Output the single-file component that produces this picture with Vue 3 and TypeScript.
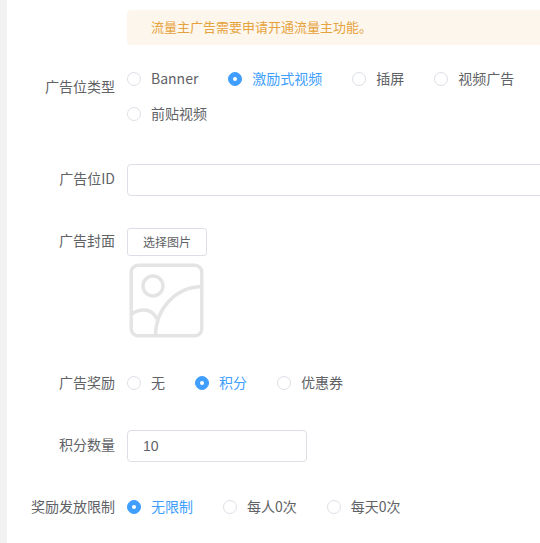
<script setup lang="ts">
import { ref } from 'vue'

interface RadioOption {
  value: string
  label: string
}

const typeOptions: RadioOption[] = [
  { value: 'banner', label: 'Banner' },
  { value: 'reward', label: '激励式视频' },
  { value: 'interstitial', label: '插屏' },
  { value: 'video', label: '视频广告' },
  { value: 'preroll', label: '前贴视频' }
]

const rewardOptions: RadioOption[] = [
  { value: 'none', label: '无' },
  { value: 'points', label: '积分' },
  { value: 'coupon', label: '优惠券' }
]

const limitOptions: RadioOption[] = [
  { value: 'unlimited', label: '无限制' },
  { value: 'person', label: '每人0次' },
  { value: 'day', label: '每天0次' }
]

const adType = ref('reward')
const adReward = ref('points')
const rewardLimit = ref('unlimited')
const adId = ref('')
const points = ref('10')
</script>

<template>
  <div class="page">
    <form class="ad-form" @submit.prevent>
      <div class="form-row alert-row">
        <div class="alert">流量主广告需要申请开通流量主功能。</div>
      </div>

      <div class="form-row type-row">
        <label class="form-label">广告位类型</label>
        <div class="radio-group">
          <label
            v-for="item in typeOptions"
            :key="item.value"
            class="radio"
            :class="{ checked: adType === item.value }"
            @click="adType = item.value"
          >
            <span class="radio-dot"></span>
            <span class="radio-text">{{ item.label }}</span>
          </label>
        </div>
      </div>

      <div class="form-row id-row">
        <label class="form-label">广告位ID</label>
        <input v-model="adId" class="text-input wide" type="text" />
      </div>

      <div class="form-row cover-row">
        <label class="form-label short">广告封面</label>
        <div class="cover-box">
          <button class="pick-btn" type="button">选择图片</button>
          <svg class="cover-icon" width="75" height="75" viewBox="0 0 75 75" fill="none" stroke="#e4e4e4" stroke-width="3.4">
            <rect x="2.2" y="2.2" width="70.6" height="70.6" rx="7" />
            <circle cx="24" cy="23" r="10" />
            <path d="M2.5 51.5C6 48.5 10 47 14.5 47C20.5 47 25.5 50.5 28 56" />
            <path d="M26.5 73C26.5 46 46 24.5 72.5 23.5" />
          </svg>
        </div>
      </div>

      <div class="form-row reward-row">
        <label class="form-label">广告奖励</label>
        <div class="radio-group">
          <label
            v-for="item in rewardOptions"
            :key="item.value"
            class="radio"
            :class="{ checked: adReward === item.value }"
            @click="adReward = item.value"
          >
            <span class="radio-dot"></span>
            <span class="radio-text">{{ item.label }}</span>
          </label>
        </div>
      </div>

      <div class="form-row points-row">
        <label class="form-label input-label">积分数量</label>
        <input v-model="points" class="text-input narrow" type="text" />
      </div>

      <div class="form-row">
        <label class="form-label">奖励发放限制</label>
        <div class="radio-group">
          <label
            v-for="item in limitOptions"
            :key="item.value"
            class="radio"
            :class="{ checked: rewardLimit === item.value }"
            @click="rewardLimit = item.value"
          >
            <span class="radio-dot"></span>
            <span class="radio-text">{{ item.label }}</span>
          </label>
        </div>
      </div>
    </form>
  </div>
</template>

<style scoped>
.page {
  width: 540px;
  height: 543px;
  overflow: hidden;
  box-sizing: border-box;
  border-left: 7px solid #f2f2f2;
  background: #fff;
  font-family: "Noto Sans CJK SC", "Liberation Sans", sans-serif;
  font-size: 14px;
  color: #606266;
}

.ad-form {
  width: 613px;
  padding-top: 10px;
}

.form-row {
  display: flex;
  align-items: flex-start;
}

.alert-row {
  padding-left: 120px;
  margin-bottom: 15px;
}

.type-row {
  margin-bottom: 34px;
}

.id-row {
  margin-bottom: 32px;
}

.cover-row {
  margin-bottom: 28px;
}

.reward-row {
  margin-bottom: 32px;
}

.points-row {
  margin-bottom: 28px;
}

.form-label {
  flex: none;
  width: 108px;
  padding-right: 12px;
  text-align: right;
  line-height: 32px;
  white-space: nowrap;
}

.type-row .form-label {
  line-height: 52px;
}

.id-row .form-label,
.form-label.input-label {
  line-height: 28px;
}

.form-label.short {
  line-height: 24px;
}

.alert {
  flex: 1;
  height: 35px;
  line-height: 33px;
  padding-left: 24px;
  border-radius: 4px;
  background: #fdf6ec;
  color: #e6a23c;
  font-size: 13px;
}

.radio-group {
  flex: 1;
  display: flex;
  flex-wrap: wrap;
}

.radio {
  display: flex;
  align-items: center;
  height: 32px;
  margin-right: 30px;
  cursor: pointer;
}

.type-row .radio {
  height: 35px;
}

.radio-dot {
  position: relative;
  width: 14px;
  height: 14px;
  margin-top: 2px;
  box-sizing: border-box;
  border: 1px solid #dcdfe6;
  border-radius: 50%;
  background: #fff;
}

.radio-text {
  margin-left: 10px;
  line-height: 1;
}

.radio.checked .radio-dot {
  border-color: #409eff;
  background: #409eff;
}

.radio.checked .radio-dot::after {
  content: '';
  position: absolute;
  top: 4px;
  left: 4px;
  width: 4px;
  height: 4px;
  border-radius: 50%;
  background: #fff;
}

.radio.checked .radio-text {
  color: #409eff;
}

.text-input {
  display: block;
  height: 32px;
  box-sizing: border-box;
  padding: 0 15px;
  border: 1px solid #dcdfe6;
  border-radius: 4px;
  outline: none;
  background: #fff;
  font-family: "Liberation Sans", sans-serif;
  font-size: 14px;
  color: #606266;
}

.text-input.wide {
  flex: 1;
  min-width: 0;
}

.text-input.narrow {
  width: 180px;
}

.cover-box {
  display: flex;
  flex-direction: column;
  align-items: flex-start;
}

.pick-btn {
  width: 80px;
  height: 28px;
  padding: 0 0 2px;
  border: 1px solid #dcdfe6;
  border-radius: 3px;
  background: #fff;
  font: inherit;
  font-size: 12px;
  color: #606266;
}

.cover-icon {
  display: block;
  margin: 7px 0 0 2px;
}
</style>

<style>
html,
body {
  margin: 0;
  overflow: hidden;
  background: #fff;
}
</style>
